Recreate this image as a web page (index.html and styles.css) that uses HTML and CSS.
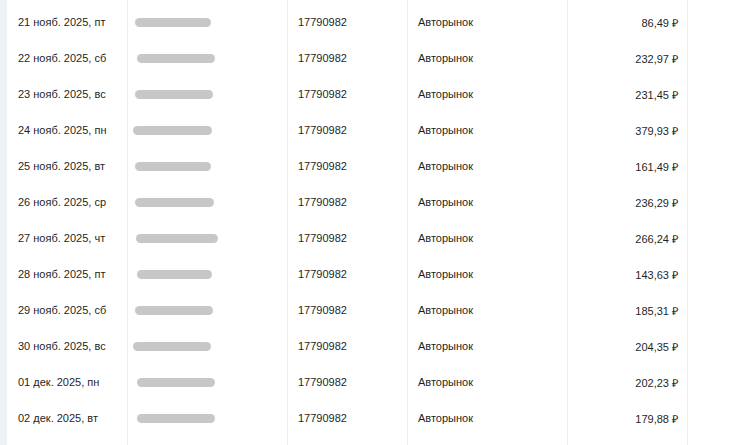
FILE: index.html
```html
<!DOCTYPE html>
<html lang="ru">
<head>
    <meta charset="UTF-8">
    <meta name="viewport" content="width=device-width, initial-scale=1.0">
    <title>Операции</title>
    <link rel="stylesheet" href="styles.css">
</head>
<body>

<div class="page">
    <div class="side-strip"></div>
    <div class="table">
        <div class="cell date">21 нояб. 2025, пт</div>
        <div class="cell hidden"><span class="blob w76"></span></div>
        <div class="cell">17790982</div>
        <div class="cell">Авторынок</div>
        <div class="cell sum">86,49 ₽</div>

        <div class="cell date">22 нояб. 2025, сб</div>
        <div class="cell hidden"><span class="blob w78 s2"></span></div>
        <div class="cell">17790982</div>
        <div class="cell">Авторынок</div>
        <div class="cell sum">232,97 ₽</div>

        <div class="cell date">23 нояб. 2025, вс</div>
        <div class="cell hidden"><span class="blob w78"></span></div>
        <div class="cell">17790982</div>
        <div class="cell">Авторынок</div>
        <div class="cell sum">231,45 ₽</div>

        <div class="cell date">24 нояб. 2025, пн</div>
        <div class="cell hidden"><span class="blob w79 s0"></span></div>
        <div class="cell">17790982</div>
        <div class="cell">Авторынок</div>
        <div class="cell sum">379,93 ₽</div>

        <div class="cell date">25 нояб. 2025, вт</div>
        <div class="cell hidden"><span class="blob w76"></span></div>
        <div class="cell">17790982</div>
        <div class="cell">Авторынок</div>
        <div class="cell sum">161,49 ₽</div>

        <div class="cell date">26 нояб. 2025, ср</div>
        <div class="cell hidden"><span class="blob w79"></span></div>
        <div class="cell">17790982</div>
        <div class="cell">Авторынок</div>
        <div class="cell sum">236,29 ₽</div>

        <div class="cell date">27 нояб. 2025, чт</div>
        <div class="cell hidden"><span class="blob w82 s1"></span></div>
        <div class="cell">17790982</div>
        <div class="cell">Авторынок</div>
        <div class="cell sum">266,24 ₽</div>

        <div class="cell date">28 нояб. 2025, пт</div>
        <div class="cell hidden"><span class="blob w75 s2"></span></div>
        <div class="cell">17790982</div>
        <div class="cell">Авторынок</div>
        <div class="cell sum">143,63 ₽</div>

        <div class="cell date">29 нояб. 2025, сб</div>
        <div class="cell hidden"><span class="blob w78"></span></div>
        <div class="cell">17790982</div>
        <div class="cell">Авторынок</div>
        <div class="cell sum">185,31 ₽</div>

        <div class="cell date">30 нояб. 2025, вс</div>
        <div class="cell hidden"><span class="blob w78 s0"></span></div>
        <div class="cell">17790982</div>
        <div class="cell">Авторынок</div>
        <div class="cell sum">204,35 ₽</div>

        <div class="cell date">01 дек. 2025, пн</div>
        <div class="cell hidden"><span class="blob w78 s2"></span></div>
        <div class="cell">17790982</div>
        <div class="cell">Авторынок</div>
        <div class="cell sum">202,23 ₽</div>

        <div class="cell date">02 дек. 2025, вт</div>
        <div class="cell hidden"><span class="blob w78 s2"></span></div>
        <div class="cell">17790982</div>
        <div class="cell">Авторынок</div>
        <div class="cell sum">179,88 ₽</div>

        <div class="cell"></div>
        <div class="cell"></div>
        <div class="cell"></div>
        <div class="cell"></div>
        <div class="cell"></div>
    </div>
</div>

</body>
</html>
```

FILE: styles.css
```css
:root {
    --strip-bg: #eef1f6;
    --line: #ececf0;
    --text: #1f1f1f;
    --blob: #c7c7c7;
}

* {
    box-sizing: border-box;
    margin: 0;
    padding: 0;
}

html, body {
    height: 100%;
    overflow: hidden;
}

body {
    font-family: "Liberation Sans", Arial, sans-serif;
    font-size: 11px;
    color: var(--text);
    background-color: #ffffff;
}

.page {
    display: flex;
    height: 100%;
}

.side-strip {
    width: 7px;
    background-color: var(--strip-bg);
}

.table {
    display: grid;
    grid-template-columns: 121px 160px 120px 160px 120px;
    grid-template-rows: 40px repeat(11, 36px) 1fr;
    height: 100%;
}

.cell {
    display: flex;
    align-items: center;
    padding: 0 10px;
    border-right: 1px solid var(--line);
    white-space: nowrap;
}

.cell:nth-child(-n+5) {
    padding-top: 4px;
}

.date {
    padding-left: 11px;
}

.hidden {
    padding-left: 7px;
}

.sum {
    justify-content: flex-end;
    padding-right: 9px;
}

.blob {
    display: block;
    height: 9px;
    border-radius: 5px;
    background-color: var(--blob);
    filter: blur(0.7px);
}

.w75 { width: 75px; }
.w76 { width: 76px; }
.w78 { width: 78px; }
.w79 { width: 79px; }
.w82 { width: 82px; }

.s0 { margin-left: -2px; }
.s1 { margin-left: 1px; }
.s2 { margin-left: 2px; }
```
